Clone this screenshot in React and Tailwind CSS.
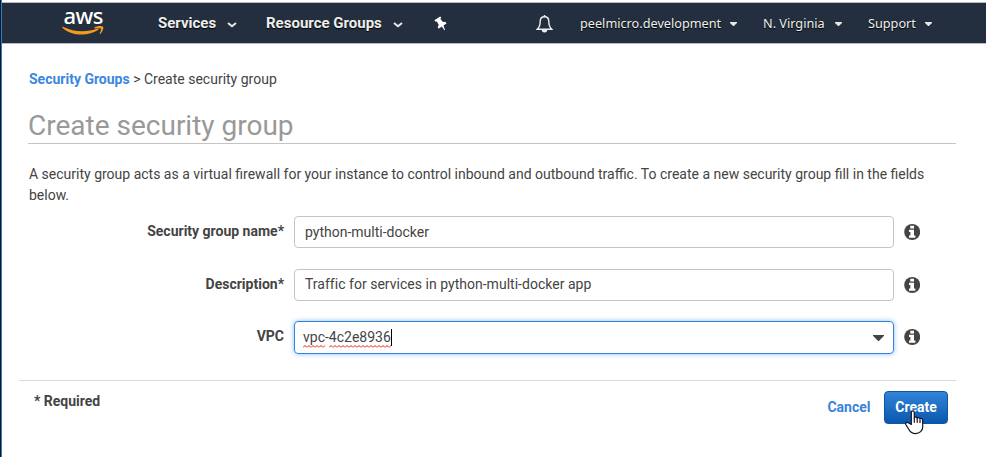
function Chevron() {
  return (
    <svg className="h-[6px] w-[10px]" viewBox="0 0 10 6" fill="none" stroke="#e8e8e8" strokeWidth="2">
      <path d="M1 1l4 3.300L9 1" />
    </svg>
  );
}

function NavCaret() {
  return (
    <svg className="h-1 w-[7px]" viewBox="0 0 7 4" fill="#e6e6e6">
      <path d="M0 0h7v1L3.9 4h-.8L0 1z" />
    </svg>
  );
}

function InfoIcon() {
  return (
    <svg className="mt-[8px] ml-[10px] size-4" viewBox="0 0 16 16">
      <circle cx="8.200" cy="8" r="8" fill="#444" />
      <path d="M6.300 1.800h3.700v2.700H6.300zM5 5.700h5v5.800h1.400v2.200H5v-2.200h1.400V7.900H5z" fill="#fff" />
    </svg>
  );
}

function Logo() {
  return (
    <div className="h-[34px] w-[42px] shrink-0">
      <div className="h-[22px] pl-[1.500px] font-['Noto_Sans',sans-serif] text-[22px] leading-[23px] font-medium tracking-[-0.6px] text-white">aws</div>
      <svg className="h-[10px] w-[42px]" viewBox="0 0 42 10" fill="#f7981f">
        <path d="M.3 1.2C.5.6 1 .7 1.5 1c10 5 23 5.800 34 1.600 1-.4 1.700.5.900 1.200C27 10.500 10 10.500.5 2c-.2-.3-.3-.5-.2-.8z" />
        <path d="M32.500 1.500c2-1.600 7.500-2 8.500-.8s-.5 5.500-2.600 7.200c-.5.400-.9.200-.7-.3.600-1.600 1.600-4.300 1.100-5s-3.700-.4-5.600-.2c-.8.100-1.200-.5-.7-.9z" />
      </svg>
    </div>
  );
}

function Header() {
  return (
    <header className="flex h-[42px] shrink-0 items-center border-y border-[#b9bbc4] bg-[#232f3e] text-[#eee]">
      <div className="ml-[60px] flex h-full items-start pt-px"><Logo /></div>
      <div className="ml-[54px] w-[69px] text-[15px] font-bold whitespace-nowrap [text-shadow:0_1px_1px_#000]">Services</div>
      <div className="mt-[3px] flex"><Chevron /></div>
      <div className="ml-[29px] w-[127px] text-[15px] font-bold whitespace-nowrap [text-shadow:0_1px_1px_#000]">Resource Groups</div>
      <div className="mt-[3px] flex"><Chevron /></div>
      <svg className="ml-[31px] h-[15px] w-[14px]" viewBox="0 0 14 15" fill="#fff">
        <path d="M6.200.5l1 1-.8 1.500 2.600 3 2.300-.2 1.200 1.600-3 2.200 1.500 4.300-.6.400-2.600-3.900-3.200 2.300-.9-1.700 1.100-2-2-3.600-1.600.200L.4 4.300z" />
      </svg>
      <svg className="mt-px ml-[88px] h-[18px] w-[17px]" viewBox="0 0 17 18" fill="none" stroke="#eee" strokeWidth="1.400">
        <path d="M8.500 1.800C5.500 1.800 4.200 4 4.200 6.500c0 4-1 6-3 7.800h14.600c-2-1.800-3-3.800-3-7.800 0-2.500-1.300-4.700-4.300-4.700z" />
        <path d="M8.500 0v2" />
        <path d="M5.800 15h5.400a2.700 2.500 0 0 1-5.400 0z" fill="#eee" stroke="none" />
      </svg>
      <div className="mt-[2px] ml-[27px] flex items-center font-['Noto_Sans',sans-serif] text-[12.700px] whitespace-nowrap [text-shadow:0_1px_1px_#000]">
        <span className="w-[150px]">peelmicro.development</span>
        <NavCaret />
        <span className="ml-[26px] w-[72px]">N. Virginia</span>
        <NavCaret />
        <span className="ml-[26px] w-[57px]">Support</span>
        <NavCaret />
      </div>
    </header>
  );
}

function Field({ label, children }) {
  return (
    <div className="flex items-start">
      <div className="w-[256px] pt-[5px] text-right leading-5 font-bold">{label}</div>
      <div className="ml-[10px] w-[600px]">{children}</div>
      <InfoIcon />
    </div>
  );
}

function Hand() {
  return (
    <svg className="absolute top-[18px] left-[20px] h-[25px] w-[19px]" viewBox="0 0 19 25" fill="#fff" stroke="#111122" strokeWidth="1.200" strokeLinejoin="round">
      <path d="M6.300 14.500V2.500c0-2.200 3-2.200 3 0v5.300c.3-1.200 2.700-1 2.900.5.500-1 2.600-.7 2.800.6.600-.8 2.700-.5 2.700 1.200v7c0 3.500-3 6.500-7.200 6.500-3.500 0-5.500-2-6.800-4.400L.9 14.800c-.8-1.600.8-3 2.400-2z" />
      <path d="M9.300 7.800v5M12.200 8.600v4.200M15 9.500v3.500" fill="none" />
    </svg>
  );
}

function Misspelled({ children }) {
  return (
    <span className="relative">
      {children}
      <svg className="absolute bottom-0 left-0 h-[3px] w-full" fill="none" stroke="#e81c1c">
        <defs>
          <pattern id="squiggle" width="4" height="3" patternUnits="userSpaceOnUse">
            <path d="M0 2.500l2-2 2 2" />
          </pattern>
        </defs>
        <rect width="100%" height="3" fill="url(#squiggle)" stroke="none" />
      </svg>
    </span>
  );
}

export default function App() {
  return (
    <div className="flex h-[457px] w-[986px] overflow-hidden bg-white font-[Roboto,sans-serif] text-[14px] text-[#444]">
      <div className="w-px bg-[#17181f]" />
      <div className="w-px bg-[#2d7fc6]" />
      <div className="flex flex-1 flex-col pt-[2px]">
        <Header />
        <main className="flex flex-col">
          <nav className="mt-[25px] ml-[27px] leading-5">
            <a className="font-bold text-[#3b86de]">Security Groups</a> &gt; Create security group
          </nav>
          <h1 className="mt-[18px] ml-[26px] h-[37px] w-[928px] border-b border-[#c4c4c4] text-[28px] leading-[37px] text-[#999]">Create security group</h1>
          <p className="mt-[20px] ml-[27px] w-[920px] leading-[21px]">
            A security group acts as a virtual firewall for your instance to control inbound and outbound traffic. To create a new security group fill in the fields below.
          </p>
          <div className="mt-[10px] ml-[26px] flex flex-col gap-[21px]">
            <Field label="Security group name*">
              <div className="flex h-8 items-center rounded-[4px] border border-[#c5c5c5] px-[10px]">python-multi-docker</div>
            </Field>
            <Field label="Description*">
              <div className="flex h-8 items-center rounded-[4px] border border-[#c5c5c5] px-[10px] pb-[2px] tracking-[0.02px]">Traffic for services in python-multi-docker app</div>
            </Field>
            <div className="-mt-px">
              <Field label="VPC">
                <div className="flex h-[33px] items-center justify-between rounded-[4px] border border-[#2f85da] pr-[9px] pl-[8px] shadow-[0_0_5px_#8bbcf0]">
                  <span className="flex h-[17px] items-center border-r border-black">
                    <Misspelled>vpc</Misspelled>-<Misspelled>4c2e8936</Misspelled>
                  </span>
                  <svg className="mt-px h-[6px] w-[11px]" viewBox="0 0 11 6" fill="#444"><path d="M0 0h11v.7L5.900 6h-.8L0 .7z" /></svg>
                </div>
              </Field>
            </div>
          </div>
          <footer className="mt-[26px] ml-[17px] flex h-[60px] w-[937px] items-start border-t border-[#d8d8d8]">
            <div className="mt-[10px] ml-[15px] flex-1 leading-5 font-bold">* Required</div>
            <div className="mt-[16px] mr-[13.500px] leading-5 font-bold text-[#3b82dc]">Cancel</div>
            <button className="relative mt-[10px] mr-[8px] h-[33px] w-[64px] rounded-[4px] border border-[#0d559f] bg-linear-to-b from-[#3184d9] to-[#0958ad] font-bold text-white">
              Create
              <Hand />
            </button>
          </footer>
        </main>
      </div>
    </div>
  );
}
